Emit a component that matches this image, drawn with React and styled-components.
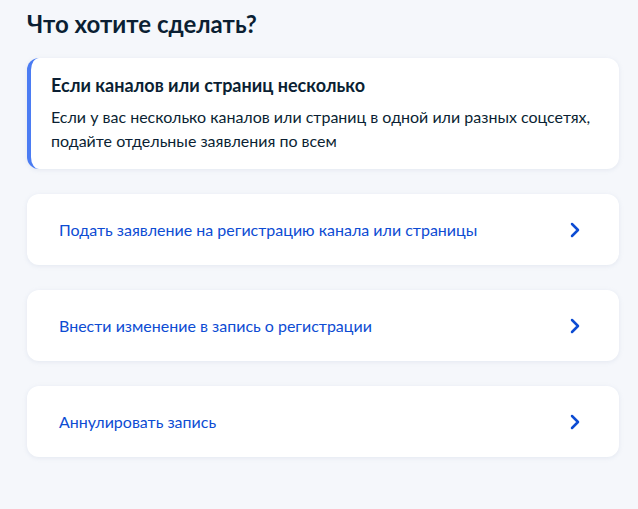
import React from "react";
import styled, { createGlobalStyle } from "styled-components";

const Global = createGlobalStyle`
  html, body {
    margin: 0;
    background: #f5f7fb;
    font-family: Lato, "Noto Sans", sans-serif;
  }
`;

const actions = [
  "Подать заявление на регистрацию канала или страницы",
  "Внести изменение в запись о регистрации",
  "Аннулировать запись",
];

const Chevron = () => (
  <svg width="12" height="16" viewBox="0 0 12 16" fill="none">
    <path d="M3 2l6 6-6 6" stroke="#0d4cd3" strokeWidth="2.5" strokeLinecap="round" strokeLinejoin="round" />
  </svg>
);

const App = () => {
  return (
    <Page>
      <Global />
      <Heading>Что хотите сделать?</Heading>
      <InfoCard>
        <InfoTitle>Если каналов или страниц несколько</InfoTitle>
        <InfoText>
          Если у вас несколько каналов или страниц в одной или разных соцсетях,
          подайте отдельные заявления по всем
        </InfoText>
      </InfoCard>
      {actions.map((a) => (
        <ActionCard key={a}>
          <ActionLabel>{a}</ActionLabel>
          <Chevron />
        </ActionCard>
      ))}
    </Page>
  );
};

export default App;

const Page = styled.div`
  width: 592px;
  padding: 8px 0 40px 27px;
  display: flex;
  flex-direction: column;
  gap: 25px;
`;

const Heading = styled.h1`
  margin: 0 0 -7px;
  font-size: 24px;
  line-height: 32px;
  font-weight: 700;
  color: #0b1f33;
`;

const Card = styled.div`
  background: #fff;
  border-radius: 12px;
  box-shadow: 0 1px 4px rgba(176, 188, 210, 0.25);
`;

const InfoCard = styled(Card)`
  border-left: 4px solid #4b7cf3;
  padding: 15px 24px 16px 20px;
  display: flex;
  flex-direction: column;
  gap: 8px;
`;

const InfoTitle = styled.div`
  font-size: 18px;
  line-height: 24px;
  font-weight: 700;
  color: #0b1f33;
`;

const InfoText = styled.div`
  font-size: 16px;
  line-height: 24px;
  color: #0b1f33;
`;

const ActionCard = styled(Card)`
  height: 71px;
  box-sizing: border-box;
  padding: 0 38px 0 32px;
  display: flex;
  align-items: center;
  justify-content: space-between;
  cursor: pointer;
`;

const ActionLabel = styled.span`
  font-size: 16px;
  color: #0d4cd3;
`;
